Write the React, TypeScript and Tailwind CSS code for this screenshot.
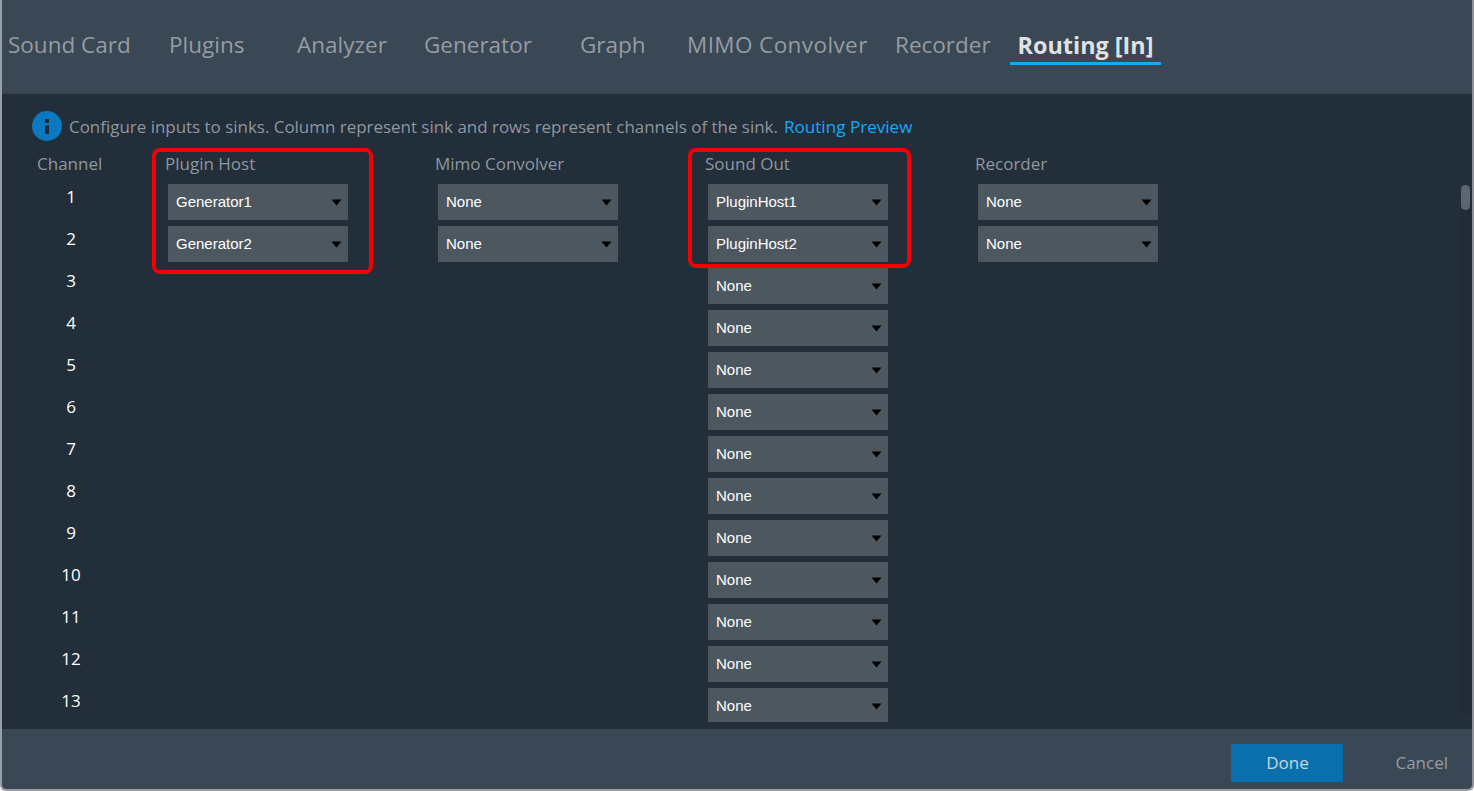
const tabs = [
  { label: 'Sound Card', className: 'w-[161px]' },
  { label: 'Plugins', className: 'w-[128px]' },
  { label: 'Analyzer', className: 'w-[127px]' },
  { label: 'Generator', className: 'w-[156px]' },
  { label: 'Graph', className: 'w-[107px]' },
  { label: 'MIMO Convolver', className: 'w-[208px] tracking-[0.4px]' },
  { label: 'Recorder', className: 'w-[115px]' },
]

const Select = ({ value }: { value: string }) => (
  <div className="flex h-9 w-[180px] shrink-0 items-center justify-between bg-[#4d5760] pl-2 pr-[6px] font-['Liberation_Sans',sans-serif] text-[15px] text-white">
    <span>{value}</span>
    <svg width="11" height="7" viewBox="0 0 11 7">
      <path d="M0.5 0.5h10L5.5 6.5z" fill="#000" />
    </svg>
  </div>
)

const Column = ({ title, values }: { title: string; values: string[] }) => (
  <div className="w-[270px] shrink-0">
    <div className="h-8 text-[17px] leading-6 text-[#8f979f]">{title}</div>
    <div className="flex flex-col gap-1.5 pl-[3px]">
      {values.map((v, i) => (
        <Select key={i} value={v} />
      ))}
    </div>
  </div>
)

export default function App() {
  const channels = Array.from({ length: 13 }, (_, i) => i + 1)
  return (
    <div className="h-[791px] w-[1474px] overflow-hidden bg-white font-['Open_Sans',sans-serif]">
      <div className="relative flex h-[791px] w-[1474px] flex-col overflow-hidden rounded-b-md border-x-2 border-b-2 border-[#9b9fa3] border-r-[#8d9195]">
        {/* Tabs */}
        <div className="h-[94px] shrink-0 border-b border-[#333f4b] bg-[#3a4754]">
          <div className="flex pt-[27px] pl-[6px]">
            {tabs.map((t) => (
              <div key={t.label} className={`${t.className} text-[22.5px] leading-[36px] whitespace-nowrap text-[#959ca3]`}>
                {t.label}
              </div>
            ))}
            <div className="h-[38px] w-[151px] border-b-[3px] border-[#14a9fb] text-center text-[23.4px] leading-[36px] font-bold whitespace-nowrap text-[#dfe2e4]">
              Routing [In]
            </div>
          </div>
        </div>

        {/* Routing grid */}
        <div className="relative flex-1 overflow-hidden bg-[#222e3a]">
          <div className="mt-[17px] flex h-[30px] items-center pl-[30px]">
            <div className="flex h-[30px] w-[30px] shrink-0 items-center justify-center rounded-full bg-[#0b78c0]">
              <svg width="4" height="15" viewBox="0 0 4 15">
                <rect x="0" y="0" width="4" height="4" fill="#1d2b3a" />
                <rect x="0" y="6.5" width="4" height="8.5" fill="#1d2b3a" />
              </svg>
            </div>
            <span className="ml-[7px] pt-0.5 text-[16.95px] whitespace-nowrap text-[#8f979f]">
              Configure inputs to sinks. Column represent sink and rows represent channels of the sink.
            </span>
            <span className="ml-[6px] pt-0.5 text-[17.1px] whitespace-nowrap text-[#14a9fb]">Routing Preview</span>
          </div>
          <div className="mt-[11px] flex h-[570px] overflow-hidden">
            <div className="ml-[35px] w-[128px] shrink-0">
              <div className="h-8 text-[17px] leading-6 text-[#8f979f]">Channel</div>
              <div className="flex w-[68px] flex-col gap-1.5">
                {channels.map((c) => (
                  <div key={c} className="h-9 -translate-y-[5px] text-center text-[17px] leading-[36px] text-white">
                    {c}
                  </div>
                ))}
              </div>
            </div>
            <Column title="Plugin Host" values={['Generator1', 'Generator2']} />
            <Column title="Mimo Convolver" values={['None', 'None']} />
            <Column title="Sound Out" values={['PluginHost1', 'PluginHost2', ...Array<string>(11).fill('None')]} />
            <Column title="Recorder" values={['None', 'None']} />
          </div>

          {/* Red highlight boxes */}
          <div className="absolute top-[54px] left-[150px] h-[126px] w-[221px] rounded-lg border-4 border-[#f50000]" />
          <div className="absolute top-[54px] left-[686px] h-[120px] w-[223px] rounded-lg border-4 border-[#f50000]" />

          {/* Scrollbar */}
          <div className="absolute top-[116px] right-0 bottom-[14px] w-[12px] bg-[#202b37]" />
          <div className="absolute top-[91px] right-[2px] h-[25px] w-[9px] rounded-full bg-[#5c6671]" />
        </div>

        {/* Footer */}
        <div className="flex h-[60px] shrink-0 items-start justify-end bg-[#3a4754] pt-[15px]">
          <div className="flex h-[38px] w-[112px] items-center justify-center bg-[#0b6fab] text-[17px] text-[#c9d6de]">
            Done
          </div>
          <div className="mr-[24px] ml-[52px] flex h-[38px] items-center text-[17px] text-[#959ca3]">Cancel</div>
        </div>
      </div>
    </div>
  )
}
